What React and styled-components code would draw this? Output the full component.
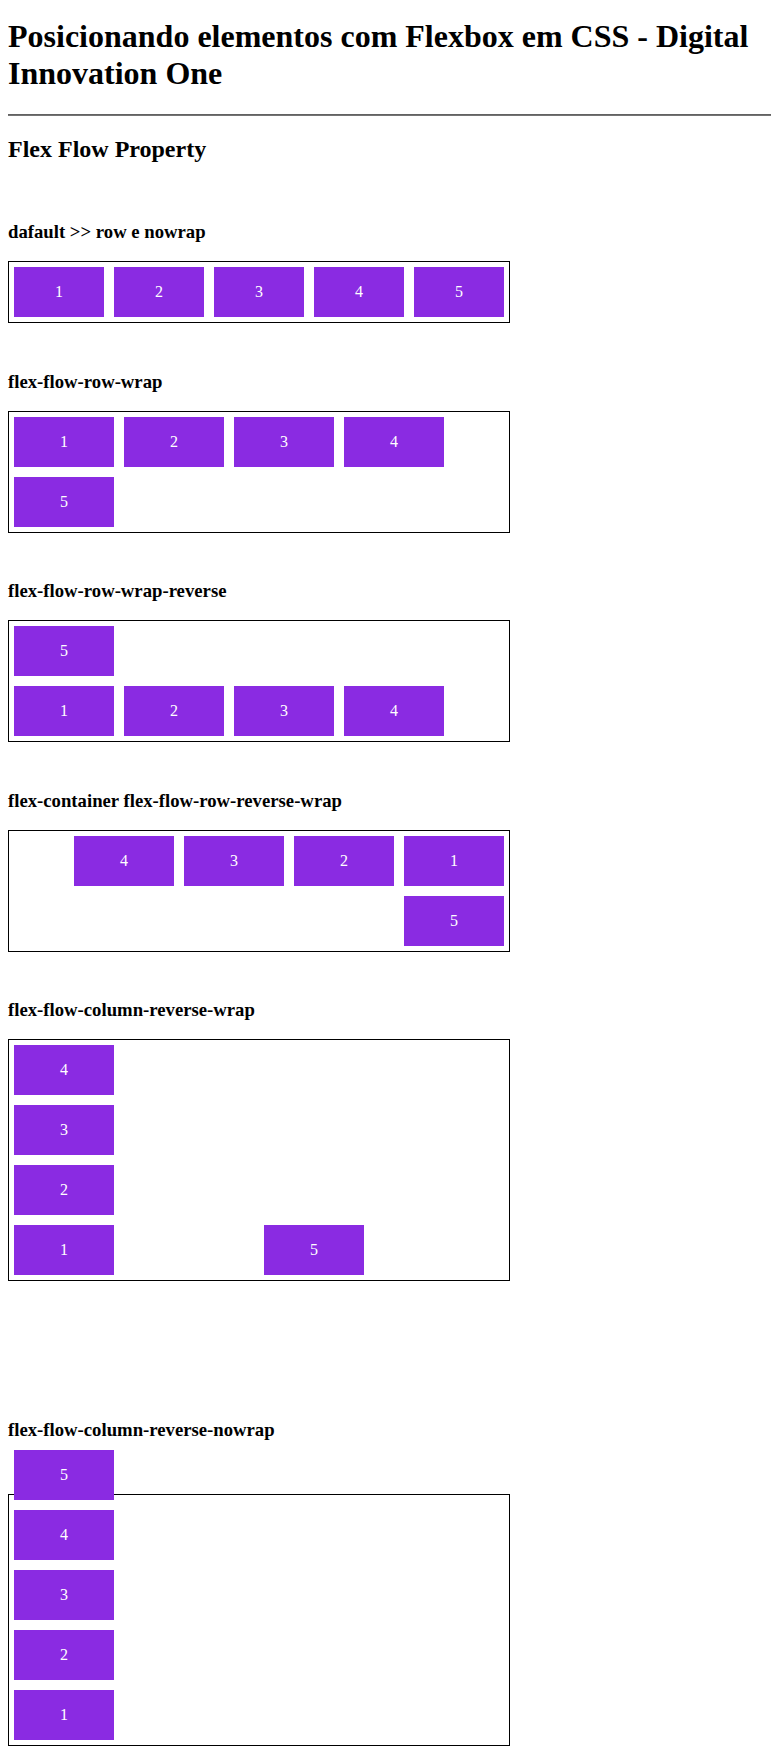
import React from 'react';
import styled, { createGlobalStyle } from 'styled-components';

const GlobalStyle = createGlobalStyle`
  body {
    margin: 0;
    background: #fff;
    color: #000;
    font-family: "Liberation Serif", "Times New Roman", serif;
  }
`;

const Page = styled.div`
  padding: 0 8px 14px;
`;

const Title = styled.h1`
  margin: 18px 0 22px;
  font-size: 32px;
  font-weight: bold;
`;

const Rule = styled.hr`
  height: 0;
  margin: 0 -8px 0 0;
  border: 0;
  border-top: 1px solid #626262;
  border-bottom: 1px solid #747474;
`;

const Subtitle = styled.h2`
  margin: 20px 0 0;
  font-size: 24px;
  font-weight: bold;
`;

const Section = styled.section`
  margin-top: ${p => p.$gap}px;
`;

const Label = styled.h3`
  margin: 0 0 ${p => p.$space || 18}px;
  padding-top: 1px;
  font-size: 18.72px;
  font-weight: bold;
`;

const FlexBox = styled.div`
  display: flex;
  flex-flow: ${p => p.$flow};
  width: 500px;
  height: ${p => (p.$height ? `${p.$height}px` : 'auto')};
  border: 1px solid #000;
`;

const Item = styled.div`
  width: 100px;
  margin: 5px;
  background: #8a2be2;
  color: #fff;
  font-size: 16px;
  line-height: 50px;
  text-align: center;
`;

const items = [1, 2, 3, 4, 5];

const sections = [
  { label: 'dafault >> row e nowrap', flow: 'row nowrap', gap: 57 },
  { label: 'flex-flow-row-wrap', flow: 'row wrap', gap: 46.5 },
  { label: 'flex-flow-row-wrap-reverse', flow: 'row wrap-reverse', gap: 46.5 },
  { label: 'flex-container flex-flow-row-reverse-wrap', flow: 'row-reverse wrap', gap: 46.5 },
  { label: 'flex-flow-column-reverse-wrap', flow: 'column-reverse wrap', gap: 46.5, height: 240 },
  { label: 'flex-flow-column-reverse-nowrap', flow: 'column-reverse nowrap', gap: 137.3, height: 250, space: 53 }
];

export default function App() {
  return (
    <>
      <GlobalStyle />
      <Page>
        <Title>Posicionando elementos com Flexbox em CSS - Digital Innovation One</Title>
        <Rule />
        <Subtitle>Flex Flow Property</Subtitle>
        {sections.map(s => (
          <Section key={s.label} $gap={s.gap}>
            <Label $space={s.space}>{s.label}</Label>
            <FlexBox $flow={s.flow} $height={s.height}>
              {items.map(n => (
                <Item key={n}>{n}</Item>
              ))}
            </FlexBox>
          </Section>
        ))}
      </Page>
    </>
  );
}
